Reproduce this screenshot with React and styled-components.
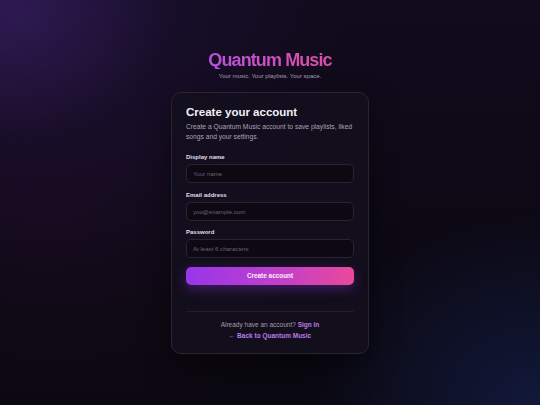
import React from 'react';
import styled, { createGlobalStyle } from 'styled-components';

const GlobalStyle = createGlobalStyle`
  html, body {
    margin: 0;
    padding: 0;
    background: #0c0914;
  }
  body {
    font-family: "Liberation Sans", Arial, sans-serif;
  }
  * {
    box-sizing: border-box;
  }
`;

const fields = [
  { id: 'name', label: 'Display name', type: 'text', placeholder: 'Your name' },
  { id: 'email', label: 'Email address', type: 'email', placeholder: 'you@example.com' },
  { id: 'password', label: 'Password', type: 'password', placeholder: 'At least 6 characters' },
];

export default function App() {
  return (
    <Page>
      <GlobalStyle />
      <Brand>Quantum Music</Brand>
      <Tagline>Your music. Your playlists. Your space.</Tagline>
      <Card>
        <Heading>Create your account</Heading>
        <Intro>
          Create a Quantum Music account to save playlists, liked songs and your settings.
        </Intro>
        <Form onSubmit={(e) => e.preventDefault()}>
          {fields.map((f) => (
            <Field key={f.id}>
              <Label htmlFor={f.id}>{f.label}</Label>
              <Input id={f.id} type={f.type} placeholder={f.placeholder} />
            </Field>
          ))}
          <SubmitButton type="submit">Create account</SubmitButton>
        </Form>
        <Divider />
        <Footer>
          <FooterLine>
            Already have an account? <Link href="#">Sign in</Link>
          </FooterLine>
          <FooterLine>
            <Link href="#">← Back to Quantum Music</Link>
          </FooterLine>
        </Footer>
      </Card>
    </Page>
  );
}

const Page = styled.div`
  min-height: 100vh;
  display: flex;
  flex-direction: column;
  align-items: center;
  padding-top: 51px;
  background:
    radial-gradient(ellipse 170px 140px at 0% 0%, rgba(62, 34, 110, 0.55), transparent),
    radial-gradient(ellipse 320px 260px at 5% 5%, rgba(44, 24, 82, 0.45), transparent),
    radial-gradient(ellipse 240px 190px at 100% 100%, rgba(20, 32, 76, 0.7), transparent),
    radial-gradient(ellipse 300px 220px at 10% 55%, rgba(40, 12, 40, 0.3), transparent),
    linear-gradient(180deg, #110b1c 0%, #0c0914 60%, #0a0810 100%);
`;

const Brand = styled.h1`
  margin: 0;
  font-size: 18px;
  line-height: 1;
  font-weight: 700;
  letter-spacing: -0.05em;
  background: linear-gradient(90deg, #b552dc 0%, #cf4fc0 55%, #dd4ea4 100%);
  -webkit-background-clip: text;
  background-clip: text;
  color: transparent;
`;

const Tagline = styled.p`
  margin: 3.5px 0 0;
  font-size: 6px;
  line-height: 1;
  color: #a6a0b0;
`;

const Card = styled.div`
  margin-top: 13.5px;
  width: 198px;
  padding: 14px 14px 12px;
  border: 1px solid #2a2336;
  border-radius: 10px;
  background: rgba(20, 15, 29, 0.92);
  box-shadow: 0 12px 30px rgba(0, 0, 0, 0.45);
`;

const Heading = styled.h2`
  margin: 0;
  font-size: 11.5px;
  line-height: 1;
  font-weight: 700;
  color: #f4f1f8;
`;

const Intro = styled.p`
  margin: 3.7px 0 0;
  font-size: 6.7px;
  line-height: 10px;
  color: #aaa3b5;
`;

const Form = styled.form`
  margin-top: 11.3px;
  display: flex;
  flex-direction: column;
  gap: 7.3px;
`;

const Field = styled.div`
  display: flex;
  flex-direction: column;
  gap: 3px;
`;

const Label = styled.label`
  font-size: 6px;
  line-height: 8px;
  font-weight: 700;
  color: #e2dee8;
`;

const Input = styled.input`
  height: 19px;
  width: 100%;
  padding: 0 6px;
  border: 1px solid #292233;
  border-radius: 5px;
  background: #0c0912;
  font-family: inherit;
  font-size: 6.1px;
  color: #e2dee8;
  outline: none;

  &::placeholder {
    color: #6a6476;
  }
`;

const SubmitButton = styled.button`
  margin-top: 1.3px;
  height: 18.3px;
  width: 100%;
  border: none;
  border-radius: 5px;
  background: linear-gradient(90deg, #9637ea 0%, #c13fcb 55%, #ea4a9a 100%);
  box-shadow: 0 4px 12px rgba(150, 55, 230, 0.35);
  font-family: inherit;
  font-size: 6.4px;
  font-weight: 700;
  color: #fbf2fb;
  cursor: pointer;
`;

const Divider = styled.hr`
  margin: 26px 0 0;
  border: none;
  border-top: 1px solid #221c2c;
`;

const Footer = styled.div`
  margin-top: 7.25px;
  display: flex;
  flex-direction: column;
  align-items: center;
`;

const FooterLine = styled.p`
  margin: 0;
  font-size: 6.5px;
  line-height: 11px;
  color: #a39dac;
`;

const Link = styled.a`
  color: #b67de6;
  font-weight: 700;
  text-decoration: none;
`;
